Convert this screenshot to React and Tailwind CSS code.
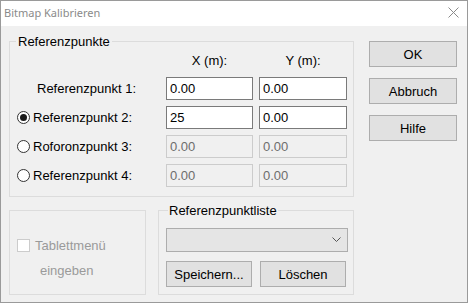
import React from 'react';

const font = { fontFamily: '"Liberation Sans", Arial, sans-serif' };

function Radio({ checked }) {
  return (
    <span className="w-[13px] h-[13px] rounded-full border border-[#333333] bg-white flex items-center justify-center shrink-0">
      {checked && <span className="w-[7px] h-[7px] rounded-full bg-[#1a1a1a]" />}
    </span>
  );
}

function Field({ value, disabled }) {
  return (
    <div
      className={`h-[23px] flex items-center pl-[3px] border ${
        disabled ? 'border-[#cccccc] bg-[#f0f0f0] text-[#6d6d6d]' : 'border-[#7a7a7a] bg-white text-black'
      }`}
    >
      {value}
    </div>
  );
}

function Btn({ children, className = '' }) {
  return (
    <button className={`h-[26px] bg-[#e1e1e1] border border-[#adadad] text-black text-[13px] flex items-center justify-center ${className}`}>
      {children}
    </button>
  );
}

const rows = [
  { label: 'Referenzpunkt 1:', radio: false, x: '0.00', y: '0.00', disabled: false },
  { label: 'Referenzpunkt 2:', radio: true, checked: true, x: '25', y: '0.00', disabled: false },
  { label: 'Roforonzpunkt 3:', radio: true, x: '0.00', y: '0.00', disabled: true },
  { label: 'Referenzpunkt 4:', radio: true, x: '0.00', y: '0.00', disabled: true },
];

export default function App() {
  return (
    <div className="w-[469px] h-[305px] bg-white overflow-hidden" style={font}>
      <div className="w-[468px] h-[303px] border border-[#9a9a9a] flex flex-col">
        <div className="h-[25px] bg-white flex items-center justify-between pl-[3px] pr-[8px]">
          <span className="text-[11px] text-[#8a8a8a]" style={{ fontFamily: '"Noto Sans", "Open Sans", sans-serif' }}>
            Bitmap Kalibrieren
          </span>
          <svg width="11" height="11" viewBox="0 0 11 11" className="mb-[2px]">
            <path d="M0.5 0.5 L10.5 10.5 M10.5 0.5 L0.5 10.5" stroke="#8a8a8a" strokeWidth="1" />
          </svg>
        </div>

        <div className="flex-1 bg-[#f0f0f0] flex items-start pl-[8px] text-[13px] leading-[15px] text-black">
          <div className="w-[345px] flex flex-col mt-[8px]">
            <fieldset className="border border-[#dcdcdc] pb-[9px]">
              <legend className="ml-[6px] px-[2px] leading-[15px]">Referenzpunkte</legend>
              <div className="grid grid-cols-[150px_87px_88px] gap-x-[6px] gap-y-[6px] items-center">
                <div className="h-[22px]" />
                <div className="h-[22px] flex items-center justify-center">X (m):</div>
                <div className="h-[22px] flex items-center justify-center">Y (m):</div>
                {rows.map((r) => (
                  <React.Fragment key={r.label}>
                    <div className={`h-[23px] flex items-center ${r.radio ? 'pl-[7px] gap-[3px]' : 'pl-[27px]'}`}>
                      {r.radio && <Radio checked={r.checked} />}
                      <span>{r.label}</span>
                    </div>
                    <Field value={r.x} disabled={r.disabled} />
                    <Field value={r.y} disabled={r.disabled} />
                  </React.Fragment>
                ))}
              </div>
            </fieldset>

            <div className="flex items-start gap-[12px] mt-[6px]">
              <div className="w-[137px] h-[85px] mt-[7px] border border-[#dcdcdc] flex flex-col pl-[7px] pt-[27px]">
                <div className="flex items-center gap-[5px]">
                  <span className="w-[13px] h-[13px] border border-[#cccccc] bg-white" />
                  <span className="text-[#9a9a9a]">Tablettmenü</span>
                </div>
                <span className="text-[#9a9a9a] ml-[23px] mt-[10px]">eingeben</span>
              </div>

              <fieldset className="w-[196px] border border-[#dcdcdc] pl-[7px] pr-[5px] pb-[7px]">
                <legend className="ml-[2px] px-[1px] leading-[15px]">Referenzpunktliste</legend>
                <div className="mt-[10px] h-[24px] bg-[#e5e5e5] border border-[#adadad] flex items-center justify-end pr-[6px]">
                  <svg width="9" height="6" viewBox="0 0 9 6">
                    <path d="M0.5 0.5 L4.5 4.5 L8.5 0.5" stroke="#555555" fill="none" strokeWidth="1" />
                  </svg>
                </div>
                <div className="flex gap-[8px] mt-[9px]">
                  <Btn className="w-[86px]">Speichern...</Btn>
                  <Btn className="w-[86px]">Löschen</Btn>
                </div>
              </fieldset>
            </div>
          </div>

          <div className="ml-[15px] mt-[15px] flex flex-col gap-[11px]">
            <Btn className="w-[88px] h-[25px]">OK</Btn>
            <Btn className="w-[88px] h-[25px]">Abbruch</Btn>
            <Btn className="w-[88px] h-[25px]">Hilfe</Btn>
          </div>
        </div>
      </div>
    </div>
  );
}
